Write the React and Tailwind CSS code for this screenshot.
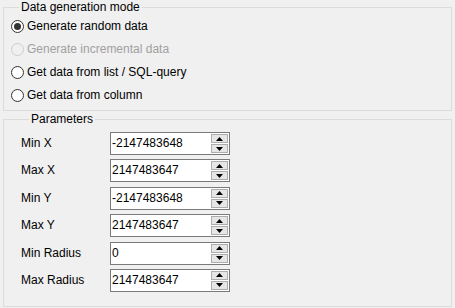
import React from "react";

function Radio({ label, checked, disabled }) {
  return (
    <div className="flex h-[23px] items-center">
      <span
        className={
          "flex h-[13px] w-[13px] items-center justify-center rounded-full border " +
          (disabled ? "border-[#cccccc] bg-[#f0f0f0]" : "border-[#333333] bg-white")
        }
      >
        {checked && <span className="h-[7px] w-[7px] rounded-full bg-[#333333]" />}
      </span>
      <span className={"ml-[3px] " + (disabled ? "text-[#a0a0a0]" : "text-black")}>{label}</span>
    </div>
  );
}

function SpinBtn({ up }) {
  return (
    <div className="flex h-[9px] w-[17px] items-center justify-center border border-[#adadad] bg-[#e6e6e6]">
      <svg width="7" height="4" viewBox="0 0 7 4">
        {up ? <polygon points="3.5,0 7,4 0,4" fill="#000" /> : <polygon points="0,0 7,0 3.5,4" fill="#000" />}
      </svg>
    </div>
  );
}

function Row({ label, value }) {
  return (
    <div className="flex h-[23px] items-center">
      <div className="w-[89px] text-black">{label}</div>
      <div className="flex h-[23px] w-[120px] items-center justify-between border border-[#7a7a7a] bg-white pl-[1px] pr-[1px]">
        <span className="text-black">{value}</span>
        <div className="flex h-full flex-col justify-center gap-[1px]">
          <SpinBtn up />
          <SpinBtn />
        </div>
      </div>
    </div>
  );
}

export default function App() {
  return (
    <div
      className="h-[308px] w-[455px] bg-[#f0f0f0] text-[12px] leading-[15px]"
      style={{ fontFamily: '"Liberation Sans", Arial, sans-serif' }}
    >
      <fieldset className="mx-[3px] w-[449px] border border-[#dcdcdc] pb-[3px] pl-[7px]">
        <legend className="ml-[8px] px-[2px] text-black">Data generation mode</legend>
        <Radio label="Generate random data" checked />
        <Radio label="Generate incremental data" disabled />
        <Radio label="Get data from list / SQL-query" />
        <Radio label="Get data from column" />
      </fieldset>
      <fieldset className="mx-[3px] mt-[1px] w-[449px] border border-[#dcdcdc] pb-[14px] pl-[17px] pt-[5px]">
        <legend className="ml-[8px] px-[2px] text-black">Parameters</legend>
        <div className="flex flex-col gap-[4.4px]">
          <Row label="Min X" value="-2147483648" />
          <Row label="Max X" value="2147483647" />
          <Row label="Min Y" value="-2147483648" />
          <Row label="Max Y" value="2147483647" />
          <Row label="Min Radius" value="0" />
          <Row label="Max Radius" value="2147483647" />
        </div>
      </fieldset>
    </div>
  );
}
